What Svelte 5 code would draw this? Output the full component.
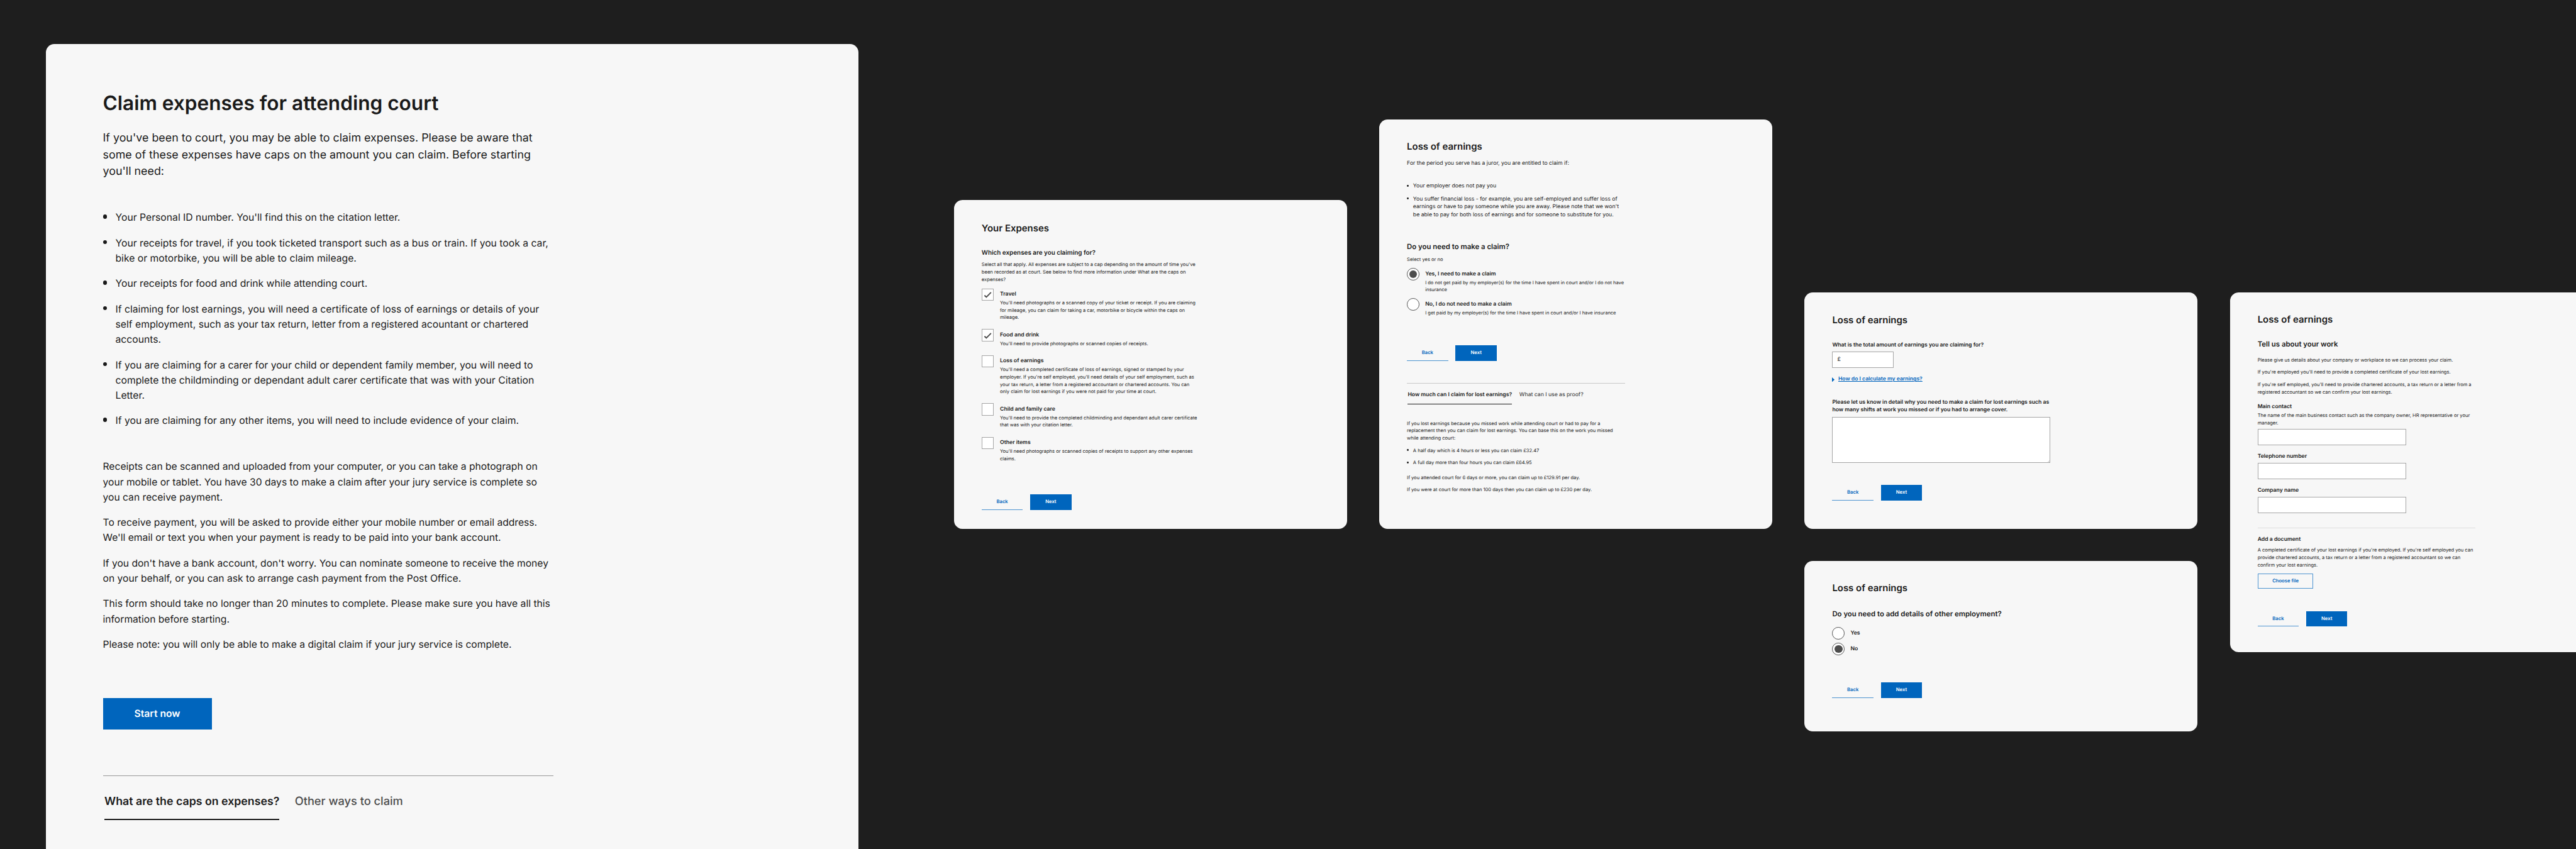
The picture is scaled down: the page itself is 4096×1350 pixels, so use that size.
<script>
  const expenses = [
    { title: "Travel", checked: true, lines: ["You'll need photographs or a scanned copy of your ticket or receipt. If you are claiming", "for mileage, you can claim for taking a car, motorbike or bicycle within the caps on", "mileage."] },
    { title: "Food and drink", checked: true, lines: ["You'll need to provide photographs or scanned copies of receipts."] },
    { title: "Loss of earnings", checked: false, lines: ["You'll need a completed certificate of loss of earnings, signed or stamped by your", "employer. If you're self employed, you'll need details of your self employment, such as", "your tax return, a letter from a registered accountant or chartered accounts. You can", "only claim for lost earnings if you were not paid for your time at court."] },
    { title: "Child and family care", checked: false, lines: ["You'll need to provide the completed childminding and dependant adult carer certificate", "that was with your citation letter."] },
    { title: "Other items", checked: false, lines: ["You'll need photographs or scanned copies of receipts to support any other expenses", "claims."] }
  ];

  const claimChoices = [
    { title: "Yes, I need to make a claim", checked: true, lines: ["I do not get paid by my employer(s) for the time I have spent in court and/or I do not have", "insurance"] },
    { title: "No, I do not need to make a claim", checked: false, lines: ["I get paid by my employer(s) for the time I have spent in court and/or I have insurance"] }
  ];

  const employmentChoices = [
    { title: "Yes", checked: false, lines: [] },
    { title: "No", checked: true, lines: [] }
  ];

  const needed = [
    ["Your Personal ID number. You'll find this on the citation letter."],
    ["Your receipts for travel, if you took ticketed transport such as a bus or train. If you took a car,", "bike or motorbike, you will be able to claim mileage."],
    ["Your receipts for food and drink while attending court."],
    ["If claiming for lost earnings, you will need a certificate of loss of earnings or details of your", "self employment, such as your tax return, letter from a registered acountant or chartered", "accounts."],
    ["If you are claiming for a carer for your child or dependent family member, you will need to", "complete the childminding or dependant adult carer certificate that was with your Citation", "Letter."],
    ["If you are claiming for any other items, you will need to include evidence of your claim."]
  ];

  const notes = [
    ["Receipts can be scanned and uploaded from your computer, or you can take a photograph on", "your mobile or tablet. You have 30 days to make a claim after your jury service is complete so", "you can receive payment."],
    ["To receive payment, you will be asked to provide either your mobile number or email address.", "We'll email or text you when your payment is ready to be paid into your bank account."],
    ["If you don't have a bank account, don't worry. You can nominate someone to receive the money", "on your behalf, or you can ask to arrange cash payment from the Post Office."],
    ["This form should take no longer than 20 minutes to complete. Please make sure you have all this", "information before starting."],
    ["Please note: you will only be able to make a digital claim if your jury service is complete."]
  ];
</script>

{#snippet text(lines)}{#each lines as line, i}{#if i}<br />{/if}{line}{/each}{/snippet}

{#snippet actions()}
  <div class="actions">
    <button class="btn back">Back</button>
    <button class="btn next">Next</button>
  </div>
{/snippet}

{#snippet choices(items, kind)}
  <div class="choices {kind}">
    {#each items as item}
      <div class="choice">
        <span class="control">
          {#if item.checked && kind === "checks"}
            <svg viewBox="0 0 36 36"><path d="M8.2 20 L13.8 25 L27.8 11" fill="none" stroke="#4d4d4d" stroke-width="3.6" /></svg>
          {:else if item.checked}
            <span class="dot"></span>
          {/if}
        </span>
        <div class="choice-text">
          <span class="label">{item.title}</span>
          {#if item.lines.length}<p class="desc">{@render text(item.lines)}</p>{/if}
        </div>
      </div>
    {/each}
  </div>
{/snippet}

<main class="canvas">
  <section class="window start">
    <h1>Claim expenses for attending court</h1>
    <p class="lead">If you've been to court, you may be able to claim expenses. Please be aware that<br />some of these expenses have caps on the amount you can claim. Before starting<br />you'll need:</p>
    <ul class="bullets">
      {#each needed as lines}<li>{@render text(lines)}</li>{/each}
    </ul>
    <div class="notes">
      {#each notes as lines}<p>{@render text(lines)}</p>{/each}
    </div>
    <button class="btn next start-now">Start now</button>
    <hr />
    <nav class="tabs">
      <span class="tab active">What are the caps on expenses?</span>
      <span class="tab">Other ways to claim</span>
    </nav>
  </section>

  <section class="window expenses">
    <h2>Your Expenses</h2>
    <h4>Which expenses are you claiming for?</h4>
    <p class="small intro">Select all that apply. All expenses are subject to a cap depending on the amount of time you've<br />been recorded as at court. See below to find more information under What are the caps on<br />expenses?</p>
    {@render choices(expenses, "checks")}
    {@render actions()}
  </section>

  <section class="window claim">
    <h2>Loss of earnings</h2>
    <p class="body">For the period you serve has a juror, you are entitled to claim if:</p>
    <ul class="bullets body reasons">
      <li>Your employer does not pay you</li>
      <li>You suffer financial loss - for example, you are self-employed and suffer loss of<br />earnings or have to pay someone while you are away. Please note that we won't<br />be able to pay for both loss of earnings and for someone to substitute for you.</li>
    </ul>
    <h3>Do you need to make a claim?</h3>
    <p class="small hint">Select yes or no</p>
    {@render choices(claimChoices, "radios")}
    {@render actions()}
    <hr />
    <nav class="tabs">
      <span class="tab active">How much can I claim for lost earnings?</span>
      <span class="tab">What can I use as proof?</span>
    </nav>
    <p class="small detail">If you lost earnings because you missed work while attending court or had to pay for a<br />replacement then you can claim for lost earnings. You can base this on the work you missed<br />while attending court:</p>
    <ul class="bullets small rates">
      <li>A half day which is 4 hours or less you can claim £32.47</li>
      <li>A full day more than four hours you can claim £64.95</li>
    </ul>
    <p class="small cap">If you attended court for 6 days or more, you can claim up to £129.91 per day.</p>
    <p class="small cap-long">If you were at court for more than 100 days then you can claim up to £230 per day.</p>
  </section>

  <section class="window amount">
    <h2>Loss of earnings</h2>
    <span class="label total">What is the total amount of earnings you are claiming for?</span>
    <div class="field money">£</div>
    <div class="disclosure">
      <svg viewBox="0 0 8 14"><path d="M0 0 L7.5 7 L0 14 Z" fill="#0065bd" /></svg>
      <a href="#earnings">How do I calculate my earnings?</a>
    </div>
    <span class="label reason">Please let us know in detail why you need to make a claim for lost earnings such as<br />how many shifts at work you missed or if you had to arrange cover.</span>
    <div class="field area">
      <svg viewBox="0 0 6 6"><path d="M0.5 5.5 L5.5 0.5 M3.5 5.5 L5.5 3.5" stroke="#777" stroke-width="0.8" /></svg>
    </div>
    {@render actions()}
  </section>

  <section class="window other-work">
    <h2>Loss of earnings</h2>
    <h3>Do you need to add details of other employment?</h3>
    {@render choices(employmentChoices, "radios")}
    {@render actions()}
  </section>

  <section class="window work">
    <h2>Loss of earnings</h2>
    <h3>Tell us about your work</h3>
    <div class="guidance small">
      <p>Please give us details about your company or workplace so we can process your claim.</p>
      <p>If you're employed you'll need to provide a completed certificate of your lost earnings.</p>
      <p>If you're self employed, you'll need to provide chartered accounts, a tax return or a letter from a<br />registered accountant so we can confirm your lost earnings.</p>
    </div>
    <span class="label">Main contact</span>
    <p class="small contact">The name of the main business contact such as the company owner, HR representative or your<br />manager.</p>
    <div class="field"></div>
    <span class="label">Telephone number</span>
    <div class="field"></div>
    <span class="label">Company name</span>
    <div class="field"></div>
    <hr />
    <span class="label">Add a document</span>
    <p class="small document">A completed certificate of your lost earnings if you're employed. If you're self employed you can<br />provide chartered accounts, a tax return or a letter from a registered accountant so we can<br />confirm your lost earnings.</p>
    <button class="btn choose">Choose file</button>
    {@render actions()}
  </section>
</main>

<style>
  /* 1rem stands for 100 design units; the 76.8rem board fills a 4096px window. */
  :global(html) { font-size: 53.3333px; }
  :global(body) { margin: 0; background: #1e1e1e; }

  .canvas {
    position: relative;
    width: 76.8rem;
    height: 25.3125rem;
    overflow: hidden;
    background: #1e1e1e;
    color: #1a1a1a;
    font-family: Inter, "Liberation Sans", sans-serif;
    white-space: nowrap;
    text-rendering: geometricPrecision;
  }

  .window {
    position: absolute;
    box-sizing: border-box;
    display: flex;
    flex-direction: column;
    align-items: flex-start;
    width: 11.72rem;
    padding-left: 0.826rem;
    border-radius: 0.25rem;
    background: #f7f7f7;
  }

  h1, h2, h3, h4, p, ul, hr { margin: 0; padding: 0; border: 0; font-weight: 600; }
  p, ul { font-weight: 400; }
  ul { list-style: none; }
  h1 { font-size: 0.5925rem; line-height: 0.7rem; }
  h2 { font-size: 0.28rem; line-height: 0.36rem; }
  h3 { font-size: 0.2135rem; line-height: 0.28rem; }
  h4 { font-size: 0.1855rem; line-height: 0.26rem; }
  hr { width: 6.495rem; height: 1px; background: #c8c8c8; }
  .body { font-size: 0.1625rem; line-height: 0.237rem; }
  .small { font-size: 0.1415rem; line-height: 0.22rem; color: #222; }
  .label { font-size: 0.1625rem; line-height: 0.24rem; font-weight: 600; }

  .bullets { display: flex; flex-direction: column; }
  .bullets li { position: relative; padding-left: 0.183rem; }
  .bullets li::before {
    content: "";
    position: absolute;
    left: 0;
    top: 0.06rem;
    width: 0.056rem;
    height: 0.056rem;
    border-radius: 50%;
    background: #1a1a1a;
  }

  .btn {
    box-sizing: border-box;
    padding: 0;
    border: 0;
    border-radius: 0;
    height: 0.463rem;
    width: 1.228rem;
    font: 600 0.144rem/0.2rem Inter, "Liberation Sans", sans-serif;
    text-rendering: geometricPrecision;
  }
  .next { background: #0065bd; color: #fff; }
  .back { background: none; color: #0065bd; border-bottom: 1px solid #4d94d0; border-top: 1px solid transparent; }
  .actions { display: flex; gap: 0.222rem; }

  .tabs { display: flex; gap: 0.22rem; margin: 0.254rem 0 0 0.024rem; font-size: 0.162rem; line-height: 0.22rem; }
  .tab { padding-bottom: 0.129rem; border-bottom: 0.025rem solid transparent; font-weight: 500; color: #4d4d4d; }
  .tab.active { border-color: #1a1a1a; font-weight: 600; color: #1a1a1a; }

  .choices { display: flex; flex-direction: column; }
  .choice { display: flex; align-items: flex-start; gap: 0.181rem; }
  .choice-text { display: flex; flex-direction: column; padding-top: 0.061rem; }
  .control {
    box-sizing: border-box;
    display: flex;
    align-items: center;
    justify-content: center;
    width: 0.366rem;
    height: 0.366rem;
    border: 1px solid #a6a6a6;
    background: #fff;
  }
  .control svg { width: 0.36rem; height: 0.36rem; flex: none; }
  .checks { gap: 0.232rem; }
  .checks .desc { margin-top: 0.024rem; font-size: 0.142rem; line-height: 0.22rem; color: #222; }
  .radios { gap: 0.147rem; }
  .radios .choice { gap: 0.173rem; }
  .radios .control { width: 0.372rem; height: 0.372rem; border-color: #555; border-radius: 50%; }
  .radios .choice-text { padding-top: 0.07rem; }
  .radios .desc { margin-top: 0.025rem; font-size: 0.1408rem; line-height: 0.208rem; color: #222; }
  .dot { width: 0.234rem; height: 0.234rem; border-radius: 50%; background: #4d4d4d; }

  .field {
    box-sizing: border-box;
    width: 4.437rem;
    height: 0.484rem;
    border: 1px solid #a6a6a6;
    background: #fff;
  }

  /* Start page */
  .start { left: 1.36rem; top: 1.32rem; width: 24.24rem; height: 30rem; padding: 1.406rem 0 0 1.706rem; }
  .start .lead { margin-top: 0.464rem; font-size: 0.335rem; line-height: 0.49rem; }
  .start .bullets { margin-top: 0.909rem; gap: 0.303rem; font-size: 0.295rem; line-height: 0.4545rem; }
  .start .bullets li { padding-left: 0.375rem; }
  .start .bullets li::before { top: 0.13rem; width: 0.118rem; height: 0.118rem; }
  .notes { display: flex; flex-direction: column; gap: 0.303rem; margin-top: 0.912rem; font-size: 0.2935rem; line-height: 0.4545rem; }
  .start-now { width: 3.244rem; height: 0.95rem; margin-top: 1.3565rem; font-size: 0.295rem; }
  .start hr { width: 13.43rem; height: 0.03rem; margin-top: 1.36rem; background: #999; }
  .start .tabs { gap: 0.457rem; margin: 0.532rem 0 0 0.048rem; font-size: 0.333rem; line-height: 0.44rem; }
  .start .tab { padding-bottom: 0.293rem; border-bottom-width: 0.045rem; }
  .start .tab:not(.active) { font-size: 0.3415rem; }

  /* Your Expenses */
  .expenses { left: 28.44rem; top: 5.96rem; height: 9.8rem; padding-top: 0.672rem; }
  .expenses h4 { margin-top: 0.44rem; }
  .expenses .intro { margin-top: 0.092rem; font-size: 0.1426rem; }
  .expenses .choices { margin-top: 0.154rem; }
  .expenses .actions { margin-top: 0.949rem; }

  /* Claim question */
  .claim { left: 41.12rem; top: 3.56rem; height: 12.2rem; padding-top: 0.634rem; }
  .claim p.body { margin-top: 0.2135rem; }
  .reasons { gap: 0.142rem; margin-top: 0.441rem; }
  .claim h3 { margin-top: 0.6895rem; }
  .claim .hint { margin-top: 0.123rem; }
  .claim .choices { margin-top: 0.146rem; }
  .claim .actions { margin-top: 0.865rem; }
  .claim hr { margin-top: 0.652rem; height: 0.02rem; }
  .claim .detail { margin-top: 0.465rem; }
  .rates { gap: 0.148rem; margin-top: 0.148rem; }
  .claim .cap { margin-top: 0.221rem; }
  .claim .cap-long { margin-top: 0.144rem; }

  /* Total amount */
  .amount { left: 53.8rem; top: 8.72rem; height: 7.04rem; padding-top: 0.66rem; }
  .amount .total { margin-top: 0.436rem; }
  .money { display: flex; align-items: center; width: 1.838rem; height: 0.476rem; margin-top: 0.071rem; padding-left: 0.132rem; font-size: 0.163rem; }
  .disclosure { display: flex; align-items: center; gap: 0.1rem; margin-top: 0.237rem; font-size: 0.161rem; line-height: 0.24rem; font-weight: 600; }
  .disclosure svg { width: 0.08rem; height: 0.14rem; }
  .disclosure a { color: #0065bd; text-decoration: underline; text-decoration-thickness: 1px; }
  .amount .reason { margin-top: 0.446rem; line-height: 0.236rem; }
  .area { display: flex; align-items: flex-end; justify-content: flex-end; width: 6.5rem; height: 1.37rem; margin-top: 0.068rem; }
  .area svg { width: 0.06rem; height: 0.06rem; }
  .amount .actions { margin-top: 0.659rem; }

  /* Other employment */
  .other-work { left: 53.8rem; top: 16.72rem; height: 5.08rem; padding-top: 0.637rem; }
  .other-work h3 { margin-top: 0.458rem; }
  .other-work .choices { gap: 0.09rem; margin-top: 0.248rem; }
  .other-work .actions { margin-top: 0.807rem; }

  /* Work details */
  .work { left: 66.48rem; top: 8.72rem; height: 10.72rem; padding-top: 0.634rem; }
  .work h3 { margin-top: 0.418rem; }
  .guidance { display: flex; flex-direction: column; gap: 0.145rem; margin-top: 0.219rem; }
  .work .label { margin-top: 0.221rem; }
  .contact { margin-top: 0.027rem; }
  .work .field { margin-top: 0.067rem; }
  .work hr { margin-top: 0.436rem; background: #ddd; }
  .document { margin-top: 0.083rem; }
  .choose { width: 1.666rem; height: 0.46rem; margin-top: 0.138rem; border: 1px solid #4d94d0; background: none; color: #0065bd; }
  .work .actions { margin-top: 0.66rem; }
</style>
